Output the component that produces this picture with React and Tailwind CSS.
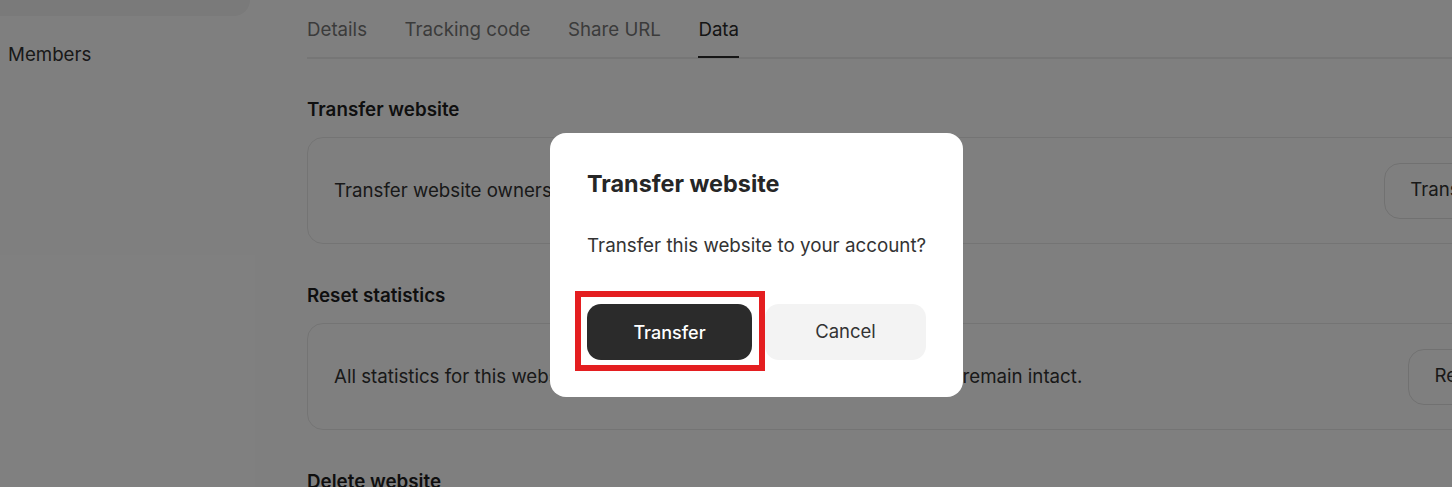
import React from "react";

const font = { fontFamily: "Inter, 'Noto Sans', sans-serif" };

function Tab({ label, active }) {
  return (
    <div className="relative pb-[15px]">
      <span className={active ? "text-[#2a2a2a]" : "text-[#777777]"}>{label}</span>
      {active && <div className="absolute bottom-[-1px] left-0 right-0 h-[2px] bg-[#2a2a2a]" />}
    </div>
  );
}

function Section({ title, text, button }) {
  return (
    <div className="mb-[40px]">
      <h2 className="text-[18.8px] leading-[24px] font-semibold text-[#1f1f1f]">{title}</h2>
      <div className="mt-[15px] flex h-[107px] items-center justify-between rounded-2xl border border-[#e8e8e8] px-[26px]">
        <p className="whitespace-nowrap text-[18.7px] leading-[24px] text-[#333333]">{text}</p>
        <button className="h-[56px] whitespace-nowrap rounded-2xl border border-[#e2e2e2] px-[25px] text-[18.7px] text-[#333333]">
          {button}
        </button>
      </div>
    </div>
  );
}

export default function App() {
  return (
    <div className="relative h-[487px] w-[1452px] overflow-hidden bg-white" style={font}>
      <div className="flex">
        <aside className="w-[307px] shrink-0">
          <div className="h-[16px] w-[250px] rounded-br-2xl bg-[#f4f4f4]" />
          <div className="mt-[27px] pl-[8px] text-[18.7px] leading-[24px] text-[#333333]">Members</div>
        </aside>
        <main className="w-[1230px] shrink-0 pt-[18px]">
          <div className="flex gap-[37.5px] border-b-2 border-[#ececec] text-[18.7px] leading-[24px]">
            <Tab label="Details" />
            <Tab label="Tracking code" />
            <Tab label="Share URL" />
            <Tab label="Data" active />
          </div>
          <div className="mt-[39px]">
            <Section
              title="Transfer website"
              text="Transfer website ownership to your account or another team."
              button="Transfer"
            />
            <Section
              title="Reset statistics"
              text="All statistics for this website will be deleted, but your tracking code will remain intact."
              button="Reset"
            />
            <h2 className="text-[18.8px] leading-[24px] font-semibold text-[#1f1f1f]">Delete website</h2>
          </div>
        </main>
      </div>

      <div className="absolute inset-0 bg-black/50" />

      <div className="absolute left-[550px] top-[133px] w-[413px] rounded-2xl bg-white p-[37px]">
        <h3 className="whitespace-nowrap text-[23.4px] leading-[28px] font-bold text-[#262626]">Transfer website</h3>
        <p className="mt-[36px] whitespace-nowrap text-[18.8px] leading-[24px] text-[#333333]">
          Transfer this website to your account?
        </p>
        <div className="mt-[46px] flex gap-[13px]">
          <div className="relative">
            <button className="h-[56px] w-[165px] rounded-[14px] bg-[#2b2b2b] text-[18px] font-medium text-white">
              Transfer
            </button>
            <div className="absolute -left-[12px] -top-[13px] h-[80px] w-[190px] border-[6px] border-[#e41e20]" />
          </div>
          <button className="h-[56px] w-[162px] rounded-[14px] bg-[#f3f3f3] text-[18.5px] text-[#333333]">
            Cancel
          </button>
        </div>
      </div>
    </div>
  );
}
